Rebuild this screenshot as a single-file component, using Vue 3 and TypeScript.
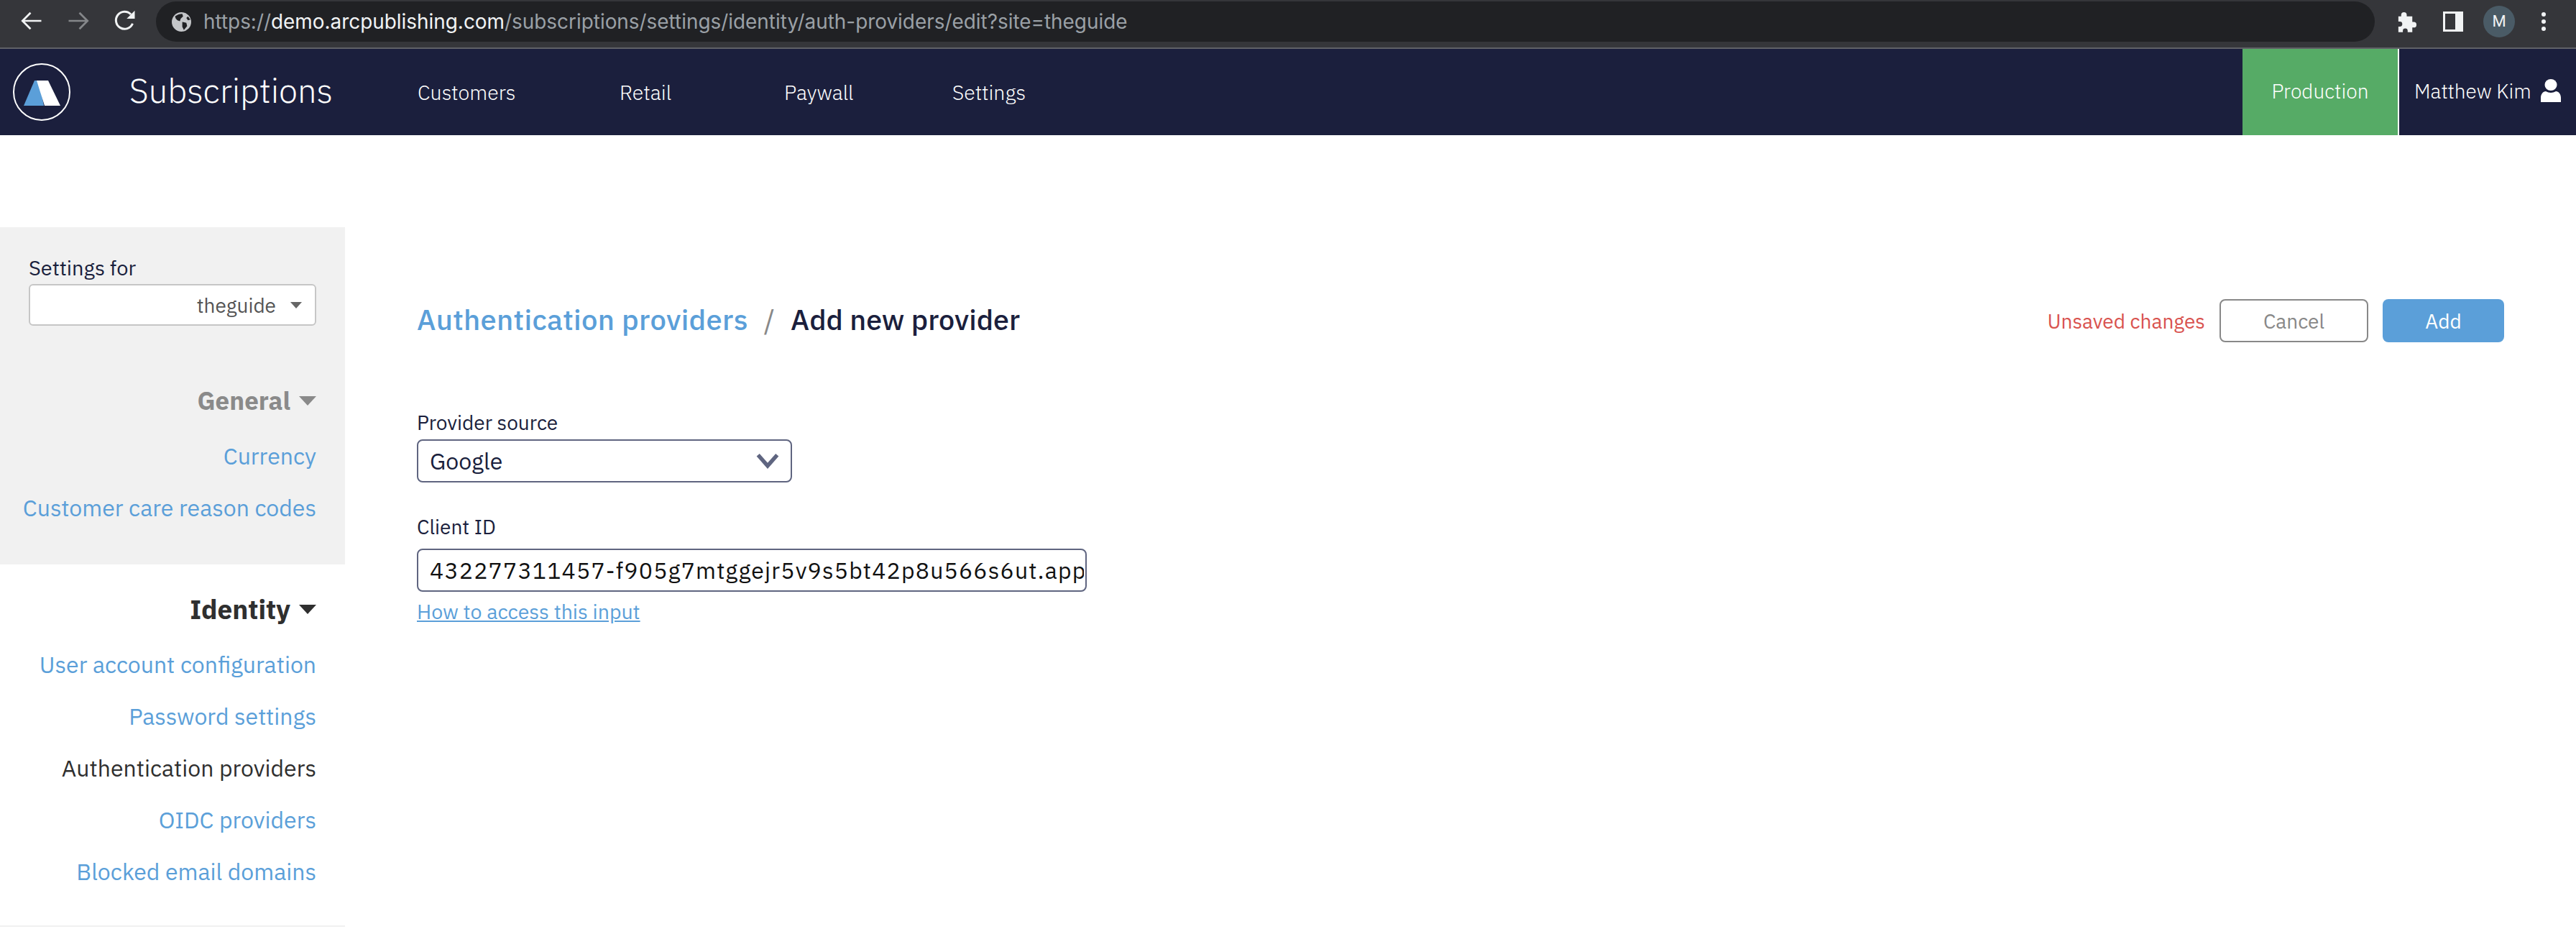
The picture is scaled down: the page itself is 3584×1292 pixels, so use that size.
<script setup lang="ts">
const navItems = [
  { label: 'Customers', width: 281 },
  { label: 'Retail', width: 229 },
  { label: 'Paywall', width: 234 },
  { label: 'Settings', width: 200 },
]
const generalLinks = ['Currency', 'Customer care reason codes']
const identityLinks = [
  { label: 'User account configuration', active: false },
  { label: 'Password settings', active: false },
  { label: 'Authentication providers', active: true },
  { label: 'OIDC providers', active: false },
  { label: 'Blocked email domains', active: false },
]
const clientId = '432277311457-f905g7mtggejr5v9s5bt42p8u566s6ut.apps.googleusercontent.com'
</script>

<template>
  <div class="page">
    <div class="chrome">
      <svg class="c-ic back" viewBox="0 0 24 24" fill="none" stroke="#f1f3f4" stroke-width="1.8"><path d="M21 12H4M11 4.500L3.500 12l7.500 7.500" /></svg>
      <svg class="c-ic fwd" viewBox="0 0 24 24" fill="none" stroke="#85878a" stroke-width="1.8"><path d="M3 12h17M13 4.500l7.500 7.500-7.500 7.500" /></svg>
      <svg class="c-ic reload" viewBox="0 0 24 24"><path fill="none" stroke="#f1f3f4" stroke-width="2" d="M19 14.500A8 8 0 1 1 17.400 6" /><path fill="#f1f3f4" d="M21 2.500V10h-7.500z" /></svg>
      <div class="omnibox">
        <svg class="globe" viewBox="0 0 24 24"><circle cx="12" cy="12" r="12" fill="#c4c6c9" /><path fill="#202124" d="M4 5c3-2 6-3 9-3l1 3-3 3-1 3-3-1-2-2zM13 12l5 1 1 4-4 5-2-4zM20 5l3 4-3 1-2-3z" /></svg>
        <span class="url"><span class="dim">https://</span><span class="host">demo.arcpublishing.com</span><span class="dim">/subscriptions/settings/identity/auth-providers/edit?site=theguide</span></span>
      </div>
      <svg class="puzzle" viewBox="0 0 24 24"><path fill="#f1f3f4" d="M9 1.500a3 3 0 0 1 3 3V6h6v6h1.500a3 3 0 0 1 0 6H18v5H13v-1.500a2.600 2.600 0 0 0-5.200 0V23H3v-6h1.500a2.700 2.700 0 0 0 0-5.400H3V6h3V4.500a3 3 0 0 1 3-3z" /></svg>
      <div class="side-ic"></div>
      <div class="avatar">M</div>
      <div class="dots"><i></i><i></i><i></i></div>
    </div>

    <header class="topbar">
      <div class="logo">
        <svg viewBox="0 0 80 80" width="80" height="80">
          <circle cx="40" cy="40" r="39" fill="none" stroke="#fff" stroke-width="2" />
          <path fill="#5b9fd9" d="M15 59 30 24h6l7 35z" />
          <path fill="#fff" d="M33 24h16l17 35H44z" />
        </svg>
      </div>
      <div class="brand">Subscriptions</div>
      <nav class="nav">
        <a v-for="item in navItems" :key="item.label" class="nav-item" :style="{ width: item.width + 'px' }">{{ item.label }}</a>
      </nav>
      <div class="env">Production</div>
      <div class="user">
        <span>Matthew Kim</span>
        <svg viewBox="0 0 28 32" width="28" height="32"><ellipse cx="14" cy="8" rx="8.500" ry="8" fill="#fff" /><path fill="#fff" d="M0 32v-6c0-5 3-9 7-9 2 1 5 2 7 2s5-1 7-2c4 0 7 4 7 9v6z" /></svg>
      </div>
    </header>

    <div class="body">
      <aside class="sidebar">
        <section class="side-top">
          <div class="settings-for">Settings for</div>
          <div class="site-select"><span>theguide</span><i class="caret small"></i></div>
          <div class="group-title muted"><span>General</span><i class="caret"></i></div>
          <a v-for="l in generalLinks" :key="l" class="side-link">{{ l }}</a>
        </section>
        <section class="side-identity">
          <div class="group-title dark"><span>Identity</span><i class="caret"></i></div>
          <a v-for="l in identityLinks" :key="l.label" class="side-link" :class="{ active: l.active }">{{ l.label }}</a>
        </section>
      </aside>

      <main class="main">
        <div class="head-row">
          <div class="crumbs">
            <a class="crumb-link">Authentication providers</a>
            <span class="slash">/</span>
            <span class="crumb-cur">Add new provider</span>
          </div>
          <div class="actions">
            <span class="unsaved">Unsaved changes</span>
            <button class="btn cancel">Cancel</button>
            <button class="btn add">Add</button>
          </div>
        </div>

        <label class="field-label first">Provider source</label>
        <div class="select">
          <span>Google</span>
          <svg viewBox="0 0 34 24" width="32" height="22" fill="none" stroke="#5f6580" stroke-width="6"><path d="M2.500 3 17 19.500 31.500 3" /></svg>
        </div>

        <label class="field-label second">Client ID</label>
        <input class="text-input" type="text" :value="clientId" readonly />
        <a class="help">How to access this input</a>
      </main>
    </div>
  </div>
</template>

<style>
html, body { margin: 0; background: #fff; }
</style>

<style scoped>
.page {
  width: 3584px;
  height: 1292px;
  overflow: hidden;
  font-family: "IBM Plex Sans", "Noto Sans", sans-serif;
  background: #fff;
  color: #1a1f3d;
}
.chrome {
  height: 66px;
  border-bottom: 2px solid #5f6166;
  background: #35363a;
  display: flex;
  align-items: center;
  position: relative;
}
.c-ic { width: 36px; height: 36px; flex: none; margin-top: -8px; }
.back { margin-left: 26px; }
.fwd { margin-left: 29px; }
.reload { margin-left: 29px; }
.omnibox {
  margin-left: 25px;
  width: 3087px;
  height: 56px;
  margin-top: -6px;
  border-radius: 28px;
  background: #202124;
  display: flex;
  align-items: center;
  flex: none;
}
.globe { width: 27px; height: 27px; margin-left: 22px; flex: none; }
.url {
  margin-left: 17px;
  font-family: Inter, Roboto, sans-serif;
  font-size: 27.900px;
  white-space: nowrap;
}
.dim { color: #9aa0a6; }
.host { color: #f1f3f4; }
.puzzle { width: 31px; height: 31px; margin-left: 29px; flex: none; margin-top: -6px; }
.side-ic {
  width: 28px;
  height: 28px;
  box-sizing: border-box;
  margin-left: 35px;
  margin-top: -6px;
  border: 3px solid #f1f3f4;
  border-right-width: 11px;
  flex: none;
}
.avatar {
  width: 44px;
  height: 44px;
  margin-left: 28px;
  margin-top: -6px;
  border-radius: 50%;
  background: #4a5b66;
  color: #f1f3f4;
  font: 22px/44px Roboto, sans-serif;
  text-align: center;
  flex: none;
}
.dots { margin-left: 37px; margin-top: -6px; display: flex; flex-direction: column; gap: 4px; }
.dots i { width: 6px; height: 6px; border-radius: 50%; background: #f1f3f4; display: block; }

.topbar {
  height: 120px;
  background: #1b1f3d;
  color: #fff;
  display: flex;
  align-items: stretch;
}
.logo { margin-left: 18px; display: flex; align-items: center; flex: none; width: 80px; }
.brand { margin-left: 82px; width: 264px; font-size: 47px; font-weight: 300; line-height: 116px; flex: none; white-space: nowrap; }
.nav { display: flex; margin-left: 137px; flex: 1; }
.nav-item { font-size: 28.500px; font-weight: 300; line-height: 122px; white-space: nowrap; flex: none; }
.env {
  width: 216px;
  margin-right: 0;
  background: #56ab66;
  border-right: 2px solid #fff;
  box-sizing: content-box;
  font-size: 28px;
  font-weight: 300;
  line-height: 118px;
  text-align: center;
  flex: none;
}
.user {
  width: 246px;
  flex: none;
  padding-left: 21px;
  box-sizing: border-box;
  display: flex;
  align-items: center;
  gap: 13px;
  font-size: 28px;
  font-weight: 300;
  padding-bottom: 4px;
  white-space: nowrap;
}

.body { display: flex; padding-top: 128px; }
.sidebar { width: 480px; flex: none; }
.side-top { background: #f1f1f1; height: 469px; box-sizing: border-box; padding: 36px 40px 0 0; text-align: right; }
.settings-for { font-size: 29px; line-height: 40px; margin-left: 40px; text-align: left; white-space: nowrap; }
.site-select {
  margin-left: 40px;
  height: 58px;
  margin-top: 3px;
  box-sizing: border-box;
  border: 2px solid #c6c6c6;
  border-radius: 6px;
  background: #fff;
  color: #555;
  font-size: 28px;
  display: flex;
  align-items: center;
  justify-content: flex-end;
  padding-right: 18px;
  gap: 20px;
}
.caret {
  display: inline-block;
  width: 0;
  height: 0;
  border-left: 12px solid transparent;
  border-right: 12px solid transparent;
  border-top: 13px solid currentColor;
}
.caret.small { border-left-width: 8px; border-right-width: 8px; border-top-width: 9px; color: #666; }
.group-title { font-size: 35px; font-weight: 700; line-height: 44px; display: flex; justify-content: flex-end; align-items: center; gap: 12px; }
.group-title.muted { color: #8a8a8a; margin-top: 82px; }
.group-title.dark { color: #2f2f2f; font-size: 37px; }
.side-link { display: block; font-size: 32px; line-height: 42px; margin-top: 30px; color: #5b9fd9; white-space: nowrap; text-align: right; }
.group-title + .side-link { margin-top: 34px; }
.side-link.active { color: #2f2f2f; }
.side-identity {
  height: 504px;
  box-sizing: border-box;
  padding: 40px 40px 0 0;
  border-bottom: 2px solid #f1f1f1;
}

.main { flex: 1; padding: 0 100px 0 100px; box-sizing: border-box; display: flex; flex-direction: column; align-items: flex-start; }
.head-row { width: 100%; display: flex; justify-content: space-between; align-items: center; padding-top: 100px; height: 60px; box-sizing: content-box; }
.crumbs { display: flex; align-items: center; font-size: 40px; font-weight: 500; white-space: nowrap; margin-top: -4px; }
.crumb-link { color: #5b9fd9; letter-spacing: 0.300px; }
.slash { color: #888; font-weight: 400; margin: 0 22px; }
.crumb-cur { color: #1b1f3d; font-size: 39.500px; }
.actions { display: flex; align-items: center; }
.unsaved { color: #d9534f; font-size: 28px; margin-right: 20px; }
.btn { width: 207px; height: 60px; box-sizing: border-box; border-radius: 8px; font: 400 28px "IBM Plex Sans", "Noto Sans", sans-serif; }
.cancel { background: #fff; border: 2px solid #888; color: #888; }
.add { background: #5b9fd9; border: 0; color: #fff; width: 169px; margin-left: 20px; }
.field-label { font-size: 28px; line-height: 40px; color: #1b1f3d; font-weight: 400; }
.field-label.first { margin-top: 92px; }
.field-label.second { margin-top: 42px; }
.select {
  margin-top: 3px;
  width: 522px;
  height: 60px;
  box-sizing: border-box;
  border: 2px solid #5f6580;
  border-radius: 8px;
  display: flex;
  align-items: center;
  justify-content: space-between;
  padding: 0 16px 0 16px;
  font-size: 32px;
}
.text-input {
  margin-top: 10px;
  width: 932px;
  height: 60px;
  box-sizing: border-box;
  border: 2px solid #5f6580;
  border-radius: 8px;
  padding: 0 2px 0 16px;
  font-family: "IBM Plex Sans", "Noto Sans", sans-serif;
  font-size: 32px;
  letter-spacing: 1.200px;
  color: #111;
  outline: none;
  background: #fff;
}
.help { color: #5b9fd9; text-decoration: underline; font-size: 28.500px; line-height: 40px; margin-top: 8px; font-weight: 400; }
</style>
